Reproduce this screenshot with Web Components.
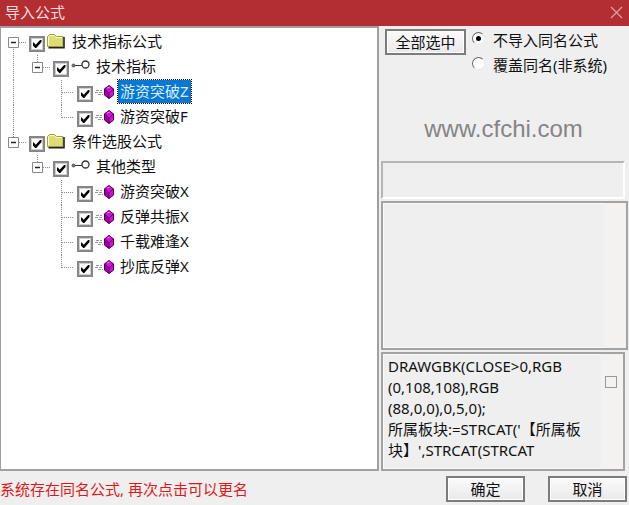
<!DOCTYPE html>
<html lang="zh-CN">
<head>
<meta charset="utf-8">
<title>导入公式</title>
<style>
html, body { height: 100%; margin: 0; }
body { font: 15px/20px "Noto Sans", "Noto Sans CJK SC", sans-serif; color: #111; background: #efefef; }
</style>
</head>
<body>
<import-dialog></import-dialog>
<script>
class BaseElement extends HTMLElement {
  render(html) {
    this.attachShadow({ mode: 'open' }).innerHTML =
      '<style>*{box-sizing:border-box}button,input,textarea{font:inherit;color:inherit;margin:0}</style>' + html;
  }
}

customElements.define('title-bar', class extends BaseElement {
  connectedCallback() {
    this.render(`<style>
      :host { display: flex; justify-content: space-between; align-items: center; height: 26px; padding: 0 6px 2px 5px; box-sizing: border-box; background: #b22e32; color: #fbdcdc; }
      h1 { font: inherit; margin: 0; }
      button { border: 0; background: none; padding: 0; width: 13px; height: 13px; display: flex; }
    </style>
    <h1><slot></slot></h1>
    <button aria-label="关闭"><svg width="13" height="13" viewBox="0 0 13 13"><path d="M1 1l11 11M12 1L1 12" stroke="#e3a0a2" stroke-width="1.2"/></svg></button>`);
  }
});

const ICONS = {
  folder: `<svg width="20" height="18" viewBox="0 0 20 18"><path d="M.5 13.500V3.500L2.500 1.500h5l2 2h6.500v10z" fill="#dddc76" stroke="#a3a03a"/><path d="M1.500 12.500V4L3 2.500h4l2 2h6" fill="none" stroke="#fbfac8"/><path d="M1.500 14.700h15.500V4" fill="none" stroke="#222" stroke-width="1.600"/></svg>`,
  link: `<svg width="20" height="18" viewBox="0 0 20 18"><circle cx="2.500" cy="7.500" r="1.500" fill="#777" stroke="#555"/><path d="M4 7.500h7" stroke="#333"/><circle cx="14.500" cy="6.500" r="3.500" fill="#fff" stroke="#333" stroke-width="1.300"/></svg>`,
  gem: `<svg width="20" height="18" viewBox="0 0 20 18"><path d="M1 7.500h6M0 9.500h8M3 11.500h5" stroke="#999" stroke-dasharray="3 1"/><path d="M14 2l5 4v6l-5 4-5-4V6z" fill="#d90bd9"/><path d="M9.500 6l4.500 3.500v6l-4.500-4z" fill="#a300a8"/><path d="M14 2.500l4.500 3.500v6L14 15.500 9.500 12V6zM9.500 6l4.500 4 4.500-4M14 10v5" fill="none" stroke="#51005a"/><path d="M12 5l3-1" stroke="#ff70ff"/></svg>`
};

/* One character per indent column: b blank, v through line, t tee, l last branch, f first root, n last root, e last expandable child. */
const GUIDES = {
  b: '', v: 'M11.500 0v25', t: 'M11.500 0v25M12 12.500h13', l: 'M11.500 0v13M12 12.500h13',
  f: 'M11.500 13v12M17 12.500h9', n: 'M11.500 0v13M17 12.500h9', e: 'M11.500 0v13M17 12.500h9'
};

customElements.define('tree-row', class extends BaseElement {
  connectedCallback() {
    const guides = [...this.getAttribute('guides')].map(g => `<svg width="24" height="25" viewBox="0 0 24 25" aria-hidden="true">
      <path d="${GUIDES[g]}" stroke="#888" stroke-dasharray="1 1" fill="none"/>
      ${'fne'.includes(g) ? '<path d="M6.500 7.500h10v10h-10z" fill="#fff" stroke="#888"/><path d="M9 12.500h5" stroke="#222" stroke-width="1.500"/>' : ''}</svg>`).join('');
    this.render(`<style>
      :host { display: flex; height: 25px; }
      svg { display: block; flex: none; }
      .guides { display: flex; }
      label { display: flex; align-items: center; padding-left: 3px; }
      input { appearance: none; width: 16px; height: 16px; margin-top: 3px; border: 2px solid #868686; box-shadow: inset 0 0 0 1px #d0d0d0; background: #fff; display: grid; place-items: center; flex: none; }
      input:checked::before { content: ""; width: 9px; height: 8px; background: #000; clip-path: polygon(0 30%, 14% 30%, 36% 58%, 84% 0, 100% 0, 100% 24%, 42% 100%, 30% 100%, 0 62%); }
      .icon { margin: 0 4px 2px 2px; }
      .text { padding: 0 2px; margin: 0 0 2px -1px; line-height: 22px; height: 23px; white-space: nowrap; }
      :host([selected]) .text { background: #0878d4; color: #d9edff; outline: 1px dotted #111; }
    </style>
    <div class="guides">${guides}</div>
    <label><input type="checkbox" checked><span class="icon">${ICONS[this.getAttribute('icon')]}</span><span class="text"><slot></slot></span></label>`);
  }
});

customElements.define('formula-tree', class extends BaseElement {
  connectedCallback() {
    this.render(`<style>
      :host { display: block; background: #fff; border: 2px solid #a0a0a0; border-left-width: 1px; padding: 2px 0 0 1px; box-sizing: border-box; overflow: auto; }
    </style><slot></slot>`);
  }
});

customElements.define('push-button', class extends BaseElement {
  connectedCallback() {
    this.render(`<style>
      :host { display: block; }
      button { display: block; width: 100%; height: 26px; padding: 0 0 1px; line-height: 20px; border: 2px solid #7c7c7c; background: linear-gradient(#fbfbfb, #e9e9e9); box-shadow: inset 0 0 0 1px #fff; white-space: nowrap; }
    </style><button type="button"><slot></slot></button>`);
  }
});

customElements.define('import-mode', class extends BaseElement {
  connectedCallback() {
    this.render(`<style>
      :host { display: flex; flex-direction: column; }
      label { display: flex; align-items: center; height: 25px; gap: 8px; white-space: nowrap; }
      input { appearance: none; width: 13px; height: 13px; margin-bottom: 2px; border-radius: 50%; border: 1px solid; border-color: #666 #e8e8e8 #e8e8e8 #666; background: #fff; display: grid; place-items: center; flex: none; }
      input:checked::before { content: ""; width: 5px; height: 5px; border-radius: 50%; background: #000; }
    </style>
    <label><input type="radio" name="mode" checked>不导入同名公式</label>
    <label><input type="radio" name="mode">覆盖同名(非系统)</label>`);
  }
});

customElements.define('text-pane', class extends BaseElement {
  connectedCallback() {
    this.render(`<style>
      :host { display: flex; border: 2px solid #a3a3a3; box-shadow: inset 0 0 0 1px #fafafa; box-sizing: border-box; background: #efefef; }
      textarea { flex: 1; min-width: 0; border: 0; outline: 0; resize: none; background: none; padding: 2px 0 0 5px; line-height: 21px; overflow: hidden; white-space: pre; }
      .track { width: 22px; background: #f3f2f0; padding: 22px 0 0 4px; }
      .thumb { width: 12px; height: 12px; border: 1px solid #999; }
    </style>
    <textarea readonly aria-label="${this.getAttribute('label')}"></textarea>
    <div class="track">${this.hasAttribute('thumb') ? '<div class="thumb"></div>' : ''}</div>`);
    this.shadowRoot.querySelector('textarea').value = this.getAttribute('value') || '';
  }
});

customElements.define('import-dialog', class extends BaseElement {
  connectedCallback() {
    this.render(`<style>
      :host { display: flex; flex-direction: column; min-height: 100%; }
      main { flex: 1; display: grid; grid-template-columns: minmax(0, 1fr) 250px; }
      aside { display: flex; flex-direction: column; padding: 0 1px 0 2px; min-width: 0; }
      .top { display: flex; flex-direction: column; gap: 38px; height: 135px; padding: 1px 6px 0 4px; }
      .choices { display: flex; gap: 6px; }
      .choices push-button { width: 81px; padding-top: 2px; }
      .site { font: 24px/28px "Liberation Sans", Arial, sans-serif; color: #858585; text-align: center; }
      .info { height: 38px; margin-right: 3px; border: 2px solid; border-color: #b4b4b4 #fff #fff #b4b4b4; }
      .list { flex: 1; margin: 2px 0 2px; }
      .code { height: 119px; margin-right: 3px; }
      footer { display: flex; align-items: center; gap: 23px; height: 34px; padding: 2px 2px 0 0; }
      footer p { flex: 1; margin: 0; color: #e01818; white-space: nowrap; }
      footer push-button { width: 79px; }
    </style>
    <title-bar>导入公式</title-bar>
    <main>
      <formula-tree>
        <tree-row guides="f" icon="folder">技术指标公式</tree-row>
        <tree-row guides="ve" icon="link">技术指标</tree-row>
        <tree-row guides="vbt" icon="gem" selected>游资突破Z</tree-row>
        <tree-row guides="vbl" icon="gem">游资突破F</tree-row>
        <tree-row guides="n" icon="folder">条件选股公式</tree-row>
        <tree-row guides="be" icon="link">其他类型</tree-row>
        <tree-row guides="bbt" icon="gem">游资突破X</tree-row>
        <tree-row guides="bbt" icon="gem">反弹共振X</tree-row>
        <tree-row guides="bbt" icon="gem">千载难逢X</tree-row>
        <tree-row guides="bbl" icon="gem">抄底反弹X</tree-row>
      </formula-tree>
      <aside>
        <div class="top">
          <div class="choices"><push-button>全部选中</push-button><import-mode></import-mode></div>
          <div class="site">www.cfchi.com</div>
        </div>
        <div class="info"></div>
        <text-pane class="list" label="说明"></text-pane>
        <text-pane class="code" label="公式源码" thumb value="DRAWGBK(CLOSE&gt;0,RGB
(0,108,108),RGB
(88,0,0),0,5,0);
所属板块:=STRCAT('【所属板
块】',STRCAT(STRCAT"></text-pane>
      </aside>
    </main>
    <footer><p>系统存在同名公式, 再次点击可以更名</p><push-button>确定</push-button><push-button>取消</push-button></footer>`);
  }
});
</script>
</body>
</html>
